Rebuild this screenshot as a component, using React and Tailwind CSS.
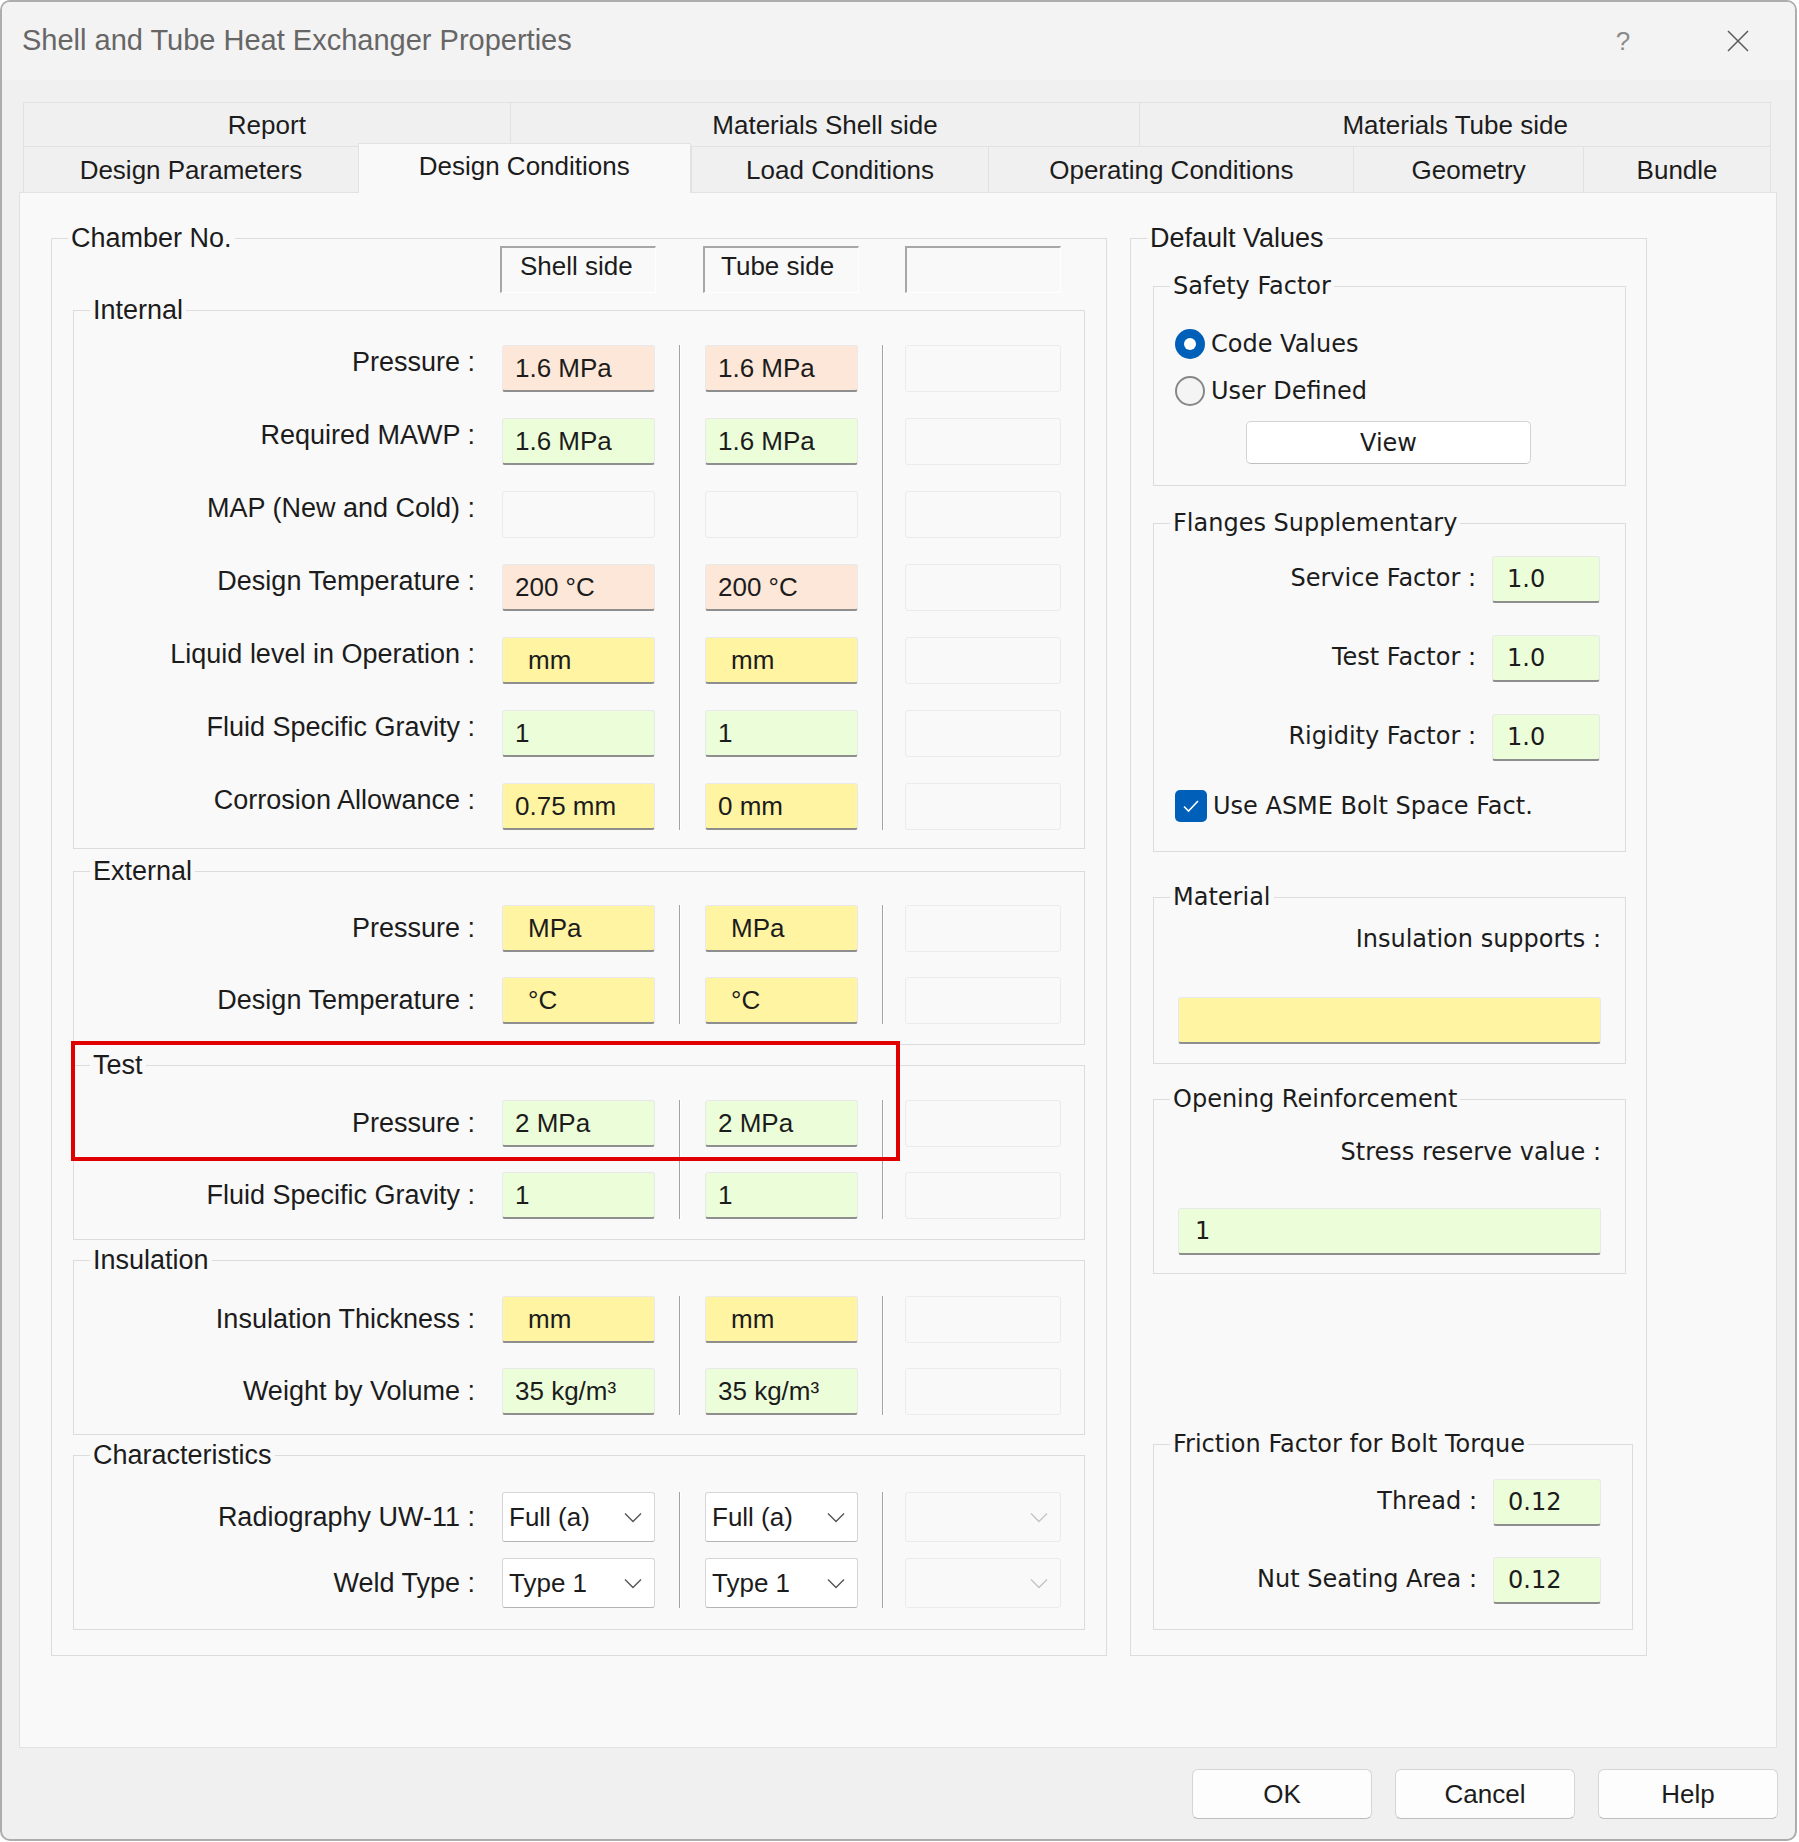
import React from 'react';

const SANS = "font-['Liberation_Sans',Arial,sans-serif]";
const WIDE = "font-['DejaVu_Sans',Verdana,sans-serif]";

const tones = {
    peach: 'bg-[#fde7d8] border border-[#e9e9e9] border-b-2 border-b-[#8e8e8e]',
    green: 'bg-[#ecfed9] border border-[#e9e9e9] border-b-2 border-b-[#8e8e8e]',
    yellow: 'bg-[#fff4a2] border border-[#e9e9e9] border-b-2 border-b-[#8e8e8e]',
    empty: 'bg-[#f9f9f9] border border-[#ebebeb]',
};

const Field = ({ value, tone = 'empty', unit }) => (
    <div className={`flex h-[47px] w-full items-center rounded-[3px] ${unit ? 'pl-[25px]' : 'pl-[12px]'} ${tones[tone]}`}>
        {value}
    </div>
);

const Chevron = ({ color }) => (
    <svg width="18" height="11" viewBox="0 0 18 11" fill="none">
        <path d="M1 1.5 L9 9.5 L17 1.5" stroke={color} strokeWidth="1.4" />
    </svg>
);

const Select = ({ value }) => (
    <div
        className={`flex h-[50px] w-full items-center justify-between rounded-[3px] border pl-[6px] pr-[12px] ${
            value ? 'border-[#d6d6d6] border-b-[#b4b4b4] bg-white' : 'border-[#ebebeb] bg-[#f9f9f9]'
        }`}
    >
        <span>{value}</span>
        <Chevron color={value ? '#555555' : '#c4c4c4'} />
    </div>
);

const Separator = () => (
    <div className="flex w-[2px]">
        <div className="w-px bg-[#a3a3a3]" />
        <div className="w-px bg-white" />
    </div>
);

// one block of rows: labels, shell side, tube side, third (empty) chamber
const Rows = ({ rows, gap, select, raised }) => (
    <div className="flex">
        <div className={`flex w-[401px] flex-col text-[27px] ${gap}`}>
            {rows.map((r) => (
                <div
                    key={r.label}
                    className={`flex items-center justify-end ${select ? 'h-[50px]' : 'h-[47px]'} ${raised ? 'pb-[13px]' : ''}`}
                >
                    {r.label}
                </div>
            ))}
        </div>
        <div className={`ml-[27px] flex w-[153px] flex-col ${gap}`}>
            {rows.map((r) =>
                select ? <Select key={r.label} value={r.a} /> : <Field key={r.label} value={r.a} tone={r.tone} unit={r.unit} />
            )}
        </div>
        <div className="ml-[24px] flex">
            <Separator />
        </div>
        <div className={`ml-[24px] flex w-[153px] flex-col ${gap}`}>
            {rows.map((r) =>
                select ? <Select key={r.label} value={r.b} /> : <Field key={r.label} value={r.b} tone={r.tone} unit={r.unit} />
            )}
        </div>
        <div className="ml-[24px] flex">
            <Separator />
        </div>
        <div className={`ml-[21px] flex w-[156px] flex-col ${gap}`}>
            {rows.map((r) => (select ? <Select key={r.label} /> : <Field key={r.label} />))}
        </div>
    </div>
);

const Group = ({ title, className = '', wide, children }) => (
    <fieldset className={`border border-[#dcdcdc] ${className}`}>
        <legend className={`ml-[16px] px-[3px] leading-[20px] ${wide ? `${WIDE} text-[24px]` : 'text-[27px]'}`}>{title}</legend>
        {children}
    </fieldset>
);

const internalRows = [
    { label: 'Pressure :', a: '1.6 MPa', b: '1.6 MPa', tone: 'peach' },
    { label: 'Required MAWP :', a: '1.6 MPa', b: '1.6 MPa', tone: 'green' },
    { label: 'MAP (New and Cold) :', tone: 'empty' },
    { label: 'Design Temperature :', a: '200 °C', b: '200 °C', tone: 'peach' },
    { label: 'Liquid level in Operation :', a: 'mm', b: 'mm', tone: 'yellow', unit: true },
    { label: 'Fluid Specific Gravity :', a: '1', b: '1', tone: 'green' },
    { label: 'Corrosion Allowance :', a: '0.75 mm', b: '0 mm', tone: 'yellow' },
];

const externalRows = [
    { label: 'Pressure :', a: 'MPa', b: 'MPa', tone: 'yellow', unit: true },
    { label: 'Design Temperature :', a: '°C', b: '°C', tone: 'yellow', unit: true },
];

const testRows = [
    { label: 'Pressure :', a: '2 MPa', b: '2 MPa', tone: 'green' },
    { label: 'Fluid Specific Gravity :', a: '1', b: '1', tone: 'green' },
];

const insulationRows = [
    { label: 'Insulation Thickness :', a: 'mm', b: 'mm', tone: 'yellow', unit: true },
    { label: 'Weight by Volume :', a: '35 kg/m³', b: '35 kg/m³', tone: 'green' },
];

const characteristicRows = [
    { label: 'Radiography UW-11 :', a: 'Full (a)', b: 'Full (a)' },
    { label: 'Weld Type :', a: 'Type 1', b: 'Type 1' },
];

const backTabs = [
    { name: 'Report', w: 'w-[487px]' },
    { name: 'Materials Shell side', w: 'w-[630px]' },
    { name: 'Materials Tube side', w: 'w-[631px]' },
];

const frontTabs = [
    { name: 'Design Parameters', w: 'w-[335px]' },
    { name: 'Design Conditions', w: 'w-[333px]', active: true },
    { name: 'Load Conditions', w: 'w-[298px]' },
    { name: 'Operating Conditions', w: 'w-[365px]' },
    { name: 'Geometry', w: 'w-[230px]' },
    { name: 'Bundle', w: 'w-[187px]' },
];

const SmallField = ({ value }) => (
    <div className={`flex h-[47px] w-[108px] items-center rounded-[3px] pl-[14px] ${tones.green}`}>{value}</div>
);

const App = () => {
    return (
        <div className={`relative h-[1842px] w-[1799px] overflow-hidden bg-white text-[26px] text-[#1c1c1c] ${SANS}`}>
            <div className="flex h-[1841px] w-[1797px] flex-col overflow-hidden rounded-[10px] border-2 border-[#adadad] bg-[#f0f0f0]">
                {/* title bar */}
                <div className="flex h-[78px] items-center bg-[#f3f3f3] pl-[20px]">
                    <span className="text-[29px] text-[#666666]">Shell and Tube Heat Exchanger Properties</span>
                    <div className="ml-auto flex items-center pr-[46px]">
                        <span className="w-[40px] text-center text-[26px] text-[#8a8a8a]">?</span>
                        <svg className="ml-[84px]" width="22" height="22" viewBox="0 0 22 22">
                            <path d="M1 1 L21 21 M21 1 L1 21" stroke="#5a5a5a" strokeWidth="1.5" />
                        </svg>
                    </div>
                </div>

                <div className="flex flex-col pl-[17px] pt-[22px]">
                    {/* tabs */}
                    <div className="ml-[4px] flex w-[1748px] border-r border-[#e2e2e2]">
                        {backTabs.map((t) => (
                            <div key={t.name} className={`flex h-[44px] items-center justify-center border-l border-t border-[#e2e2e2] pt-[2px] ${t.w}`}>
                                {t.name}
                            </div>
                        ))}
                    </div>
                    <div className="ml-[4px] flex h-[46px] w-[1748px] items-start border-r border-[#e2e2e2]">
                        {frontTabs.map((t) =>
                            t.active ? (
                                <div
                                    key={t.name}
                                    className={`relative z-10 -mt-[3px] flex h-[50px] items-center justify-center border-l border-r border-t border-[#e2e2e2] bg-[#f9f9f9] pb-[4px] ${t.w}`}
                                >
                                    {t.name}
                                </div>
                            ) : (
                                <div key={t.name} className={`flex h-[46px] items-center justify-center border-l border-t border-[#e2e2e2] pt-[2px] ${t.w}`}>
                                    {t.name}
                                </div>
                            )
                        )}
                    </div>

                    {/* tab page */}
                    <div className="flex h-[1556px] w-[1758px] items-start border border-[#e2e2e2] bg-[#f9f9f9] pl-[31px] pt-[35px]">
                        <Group title="Chamber No." className="h-[1428px] w-[1056px]">
                            <div className="-mt-[2px] flex pl-[448px]">
                                <div className="flex h-[47px] w-[156px] items-center border-b border-l-2 border-r border-t-2 border-[#a7a7a7] border-b-white border-r-white pb-[8px] pl-[18px]">
                                    Shell side
                                </div>
                                <div className="ml-[47px] flex h-[47px] w-[156px] items-center border-b border-l-2 border-r border-t-2 border-[#a7a7a7] border-b-white border-r-white pb-[8px] pl-[16px]">
                                    Tube side
                                </div>
                                <div className="ml-[46px] h-[47px] w-[156px] border-b border-l-2 border-r border-t-2 border-[#a7a7a7] border-b-white border-r-white" />
                            </div>
                            <div className="flex flex-col px-[21px]">
                                <Group title="Internal" className="mt-[7px] pb-[18px] pt-[25px]">
                                    <Rows rows={internalRows} gap="gap-[26px]" raised />
                                </Group>
                                <Group title="External" className="mt-[12px] pb-[20px] pt-[24px]">
                                    <Rows rows={externalRows} gap="gap-[25px]" />
                                </Group>
                                <Group title="Test" className="mt-[10px] pb-[20px] pt-[25px]">
                                    <Rows rows={testRows} gap="gap-[25px]" />
                                </Group>
                                <Group title="Insulation" className="mt-[10px] pb-[19px] pt-[26px]">
                                    <Rows rows={insulationRows} gap="gap-[25px]" />
                                </Group>
                                <Group title="Characteristics" className="mt-[10px] pb-[21px] pt-[27px]">
                                    <Rows rows={characteristicRows} gap="gap-[16px]" select />
                                </Group>
                            </div>
                        </Group>

                        <Group title="Default Values" className={`ml-[23px] h-[1428px] w-[517px]`}>
                            <div className={`flex flex-col pl-[22px] text-[24px] ${WIDE}`}>
                                <Group title="Safety Factor" wide className="mt-[28px] w-[473px] pb-[21px] pt-[33px]">
                                    <div className="flex h-[30px] items-center gap-[6px] pl-[21px]">
                                        <div className="flex h-[30px] w-[30px] items-center justify-center rounded-full bg-[#005fb8]">
                                            <div className="h-[12px] w-[12px] rounded-full bg-white" />
                                        </div>
                                        <span>Code Values</span>
                                    </div>
                                    <div className="mt-[17px] flex h-[30px] items-center gap-[6px] pl-[21px]">
                                        <div className="h-[30px] w-[30px] rounded-full border-2 border-[#878787] bg-[#f4f4f4]" />
                                        <span>User Defined</span>
                                    </div>
                                    <button className="ml-[92px] mt-[15px] h-[43px] w-[285px] rounded-[5px] border border-[#d3d3d3] border-b-[#c0c0c0] bg-white">
                                        View
                                    </button>
                                </Group>

                                <Group title="Flanges Supplementary" wide className="mt-[27px] w-[473px] pb-[29px] pt-[23px]">
                                    <div className="flex flex-col gap-[32px] pr-[25px]">
                                        {['Service Factor :', 'Test Factor :', 'Rigidity Factor :'].map((label) => (
                                            <div key={label} className="flex items-center justify-end">
                                                <span className="pb-[4px]">{label}</span>
                                                <div className="ml-[16px]">
                                                    <SmallField value="1.0" />
                                                </div>
                                            </div>
                                        ))}
                                    </div>
                                    <div className="mt-[29px] flex h-[32px] items-center gap-[6px] pl-[21px]">
                                        <div className="flex h-[32px] w-[32px] items-center justify-center rounded-[5px] bg-[#005fb8]">
                                            <svg width="18" height="14" viewBox="0 0 18 14" fill="none">
                                                <path d="M2 7.5 L6.5 12 L16 2" stroke="white" strokeWidth="1.6" />
                                            </svg>
                                        </div>
                                        <span>Use ASME Bolt Space Fact.</span>
                                    </div>
                                </Group>

                                <Group title="Material" wide className="mt-[35px] w-[473px] pb-[19px] pt-[17px]">
                                    <div className="pr-[24px] text-right leading-[30px]">Insulation supports :</div>
                                    <div className="mx-[24px] mt-[43px]">
                                        <Field tone="yellow" />
                                    </div>
                                </Group>

                                <Group title="Opening Reinforcement" wide className="mt-[25px] w-[473px] pb-[18px] pt-[28px]">
                                    <div className="pr-[24px] text-right leading-[30px]">Stress reserve value :</div>
                                    <div className="mx-[24px] mt-[41px]">
                                        <div className={`flex h-[47px] items-center rounded-[3px] pl-[16px] ${tones.green}`}>1</div>
                                    </div>
                                </Group>

                                <Group title="Friction Factor for Bolt Torque" wide className="mt-[160px] w-[480px] pb-[25px] pt-[25px]">
                                    <div className="flex flex-col gap-[31px] pr-[31px]">
                                        {['Thread :', 'Nut Seating Area :'].map((label) => (
                                            <div key={label} className="flex items-center justify-end">
                                                <span className="pb-[4px]">{label}</span>
                                                <div className="ml-[16px]">
                                                    <SmallField value="0.12" />
                                                </div>
                                            </div>
                                        ))}
                                    </div>
                                </Group>
                            </div>
                        </Group>
                    </div>

                    {/* dialog buttons */}
                    <div className="mt-[21px] flex justify-end gap-[23px] pr-[17px]">
                        {['OK', 'Cancel', 'Help'].map((b) => (
                            <button
                                key={b}
                                className="h-[50px] w-[180px] rounded-[6px] border border-[#d5d5d5] border-b-[#bdbdbd] bg-[#fdfdfd] text-[26px]"
                            >
                                {b}
                            </button>
                        ))}
                    </div>
                </div>
            </div>

            {/* red highlight drawn over the Test / Pressure row */}
            <div className="absolute left-[71px] top-[1041px] h-[120px] w-[829px] border-[4px] border-[#e10000]" />
        </div>
    );
};

export default App;
